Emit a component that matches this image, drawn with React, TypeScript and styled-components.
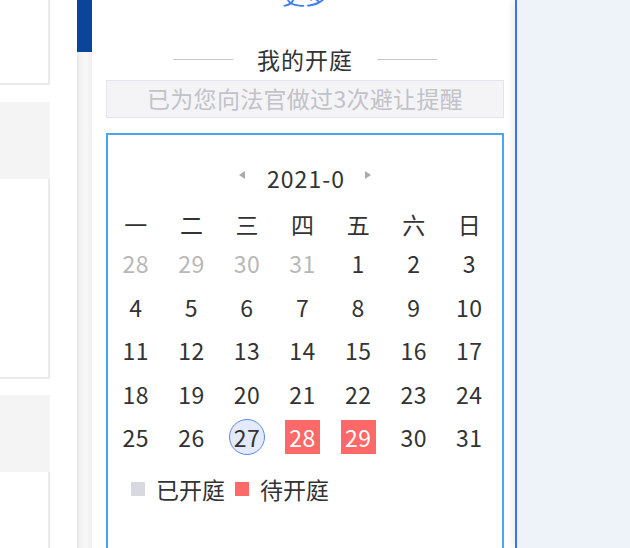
import React from 'react';
import styled, { createGlobalStyle } from 'styled-components';

const GlobalStyle = createGlobalStyle`
  html, body { margin: 0; padding: 0; }
  body {
    font-family: "Noto Sans CJK SC", "Noto Sans", sans-serif;
    background: #ffffff;
    color: #333333;
  }
`;

const Page = styled.div`
  display: flex;
  width: 630px;
  height: 548px;
  overflow: hidden;
  background: #ffffff;
`;

const SideList = styled.div`
  width: 77px;
  flex: none;
  overflow: hidden;
`;

const SideInner = styled.div`
  margin-top: -192px;
  display: flex;
  flex-direction: column;
  gap: 16.5px;
`;

const SideItem = styled.div`
  width: 50px;
  display: flex;
  flex-direction: column;
`;

const SideHead = styled.div`
  height: 77px;
  background: #f4f4f4;
`;

const SideBody = styled.div`
  height: 200px;
  box-sizing: border-box;
  background: #ffffff;
  border-right: 2px solid #ebebeb;
  border-bottom: 2px solid #ebebeb;
`;

const Scrollbar = styled.div`
  width: 15px;
  flex: none;
  background: linear-gradient(to right, #e6e6e6 0%, #f3f3f3 25%, #f8f8f8 60%, #efefef 100%);
`;

const Thumb = styled.div`
  height: 52px;
  background: #0b4599;
`;

const Panel = styled.div`
  width: 423px;
  flex: none;
  box-sizing: border-box;
  padding: 0 11px 0 14px;
  display: flex;
  flex-direction: column;
  overflow: hidden;
  background: #ffffff;
`;

const MoreLink = styled.a`
  display: block;
  margin-top: -21px;
  line-height: 30px;
  font-size: 23px;
  text-align: center;
  color: #3d7cf2;
  text-decoration: none;
`;

const Heading = styled.div`
  margin-top: 35px;
  height: 30px;
  display: flex;
  align-items: center;
  justify-content: center;
  gap: 24px;
  font-size: 23px;
  letter-spacing: 1px;
  color: #333333;
`;

const HeadLine = styled.span`
  width: 60px;
  height: 1px;
  background: #c8c8c8;
`;

const Note = styled.div`
  margin-top: 6px;
  height: 38px;
  box-sizing: border-box;
  border: 1px solid #e4e4ee;
  background: #f4f4f6;
  color: #c2c2c8;
  font-size: 23px;
  letter-spacing: 0.3px;
  line-height: 34px;
  text-align: center;
  white-space: nowrap;
`;

const CalendarBox = styled.div`
  margin-top: 15px;
  flex: 1;
  border: 2px solid #4ba6f2;
  border-bottom: none;
  padding-top: 28px;
  display: flex;
  flex-direction: column;
`;

const MonthBar = styled.div`
  height: 30px;
  display: flex;
  justify-content: center;
  align-items: flex-start;
  font-size: 23px;
  line-height: 30px;
  color: #333333;
`;

const MonthText = styled.span`
  letter-spacing: 1px;
`;

const Arrow = styled.span<{ $dir: 'left' | 'right' }>`
  width: 0;
  height: 0;
  margin-top: 8px;
  border-top: 4px solid transparent;
  border-bottom: 4px solid transparent;
  ${(p) =>
    p.$dir === 'left'
      ? 'border-right: 6px solid #aaaaaa; margin-right: 22px;'
      : 'border-left: 6px solid #aaaaaa; margin-left: 20px;'}
`;

const Grid = styled.div`
  margin-top: 12.5px;
  display: grid;
  grid-template-columns: repeat(7, 55.6px);
  grid-template-rows: 36px repeat(5, 43.5px);
  font-size: 23px;
`;

const WeekDay = styled.div`
  display: flex;
  align-items: center;
  justify-content: center;
  color: #333333;
`;

type DayKind = 'muted' | 'normal' | 'today' | 'pending';

const DayCell = styled.div`
  display: flex;
  align-items: center;
  justify-content: center;
`;

const DayMark = styled.span<{ $kind: DayKind }>`
  display: flex;
  align-items: center;
  justify-content: center;
  box-sizing: border-box;
  width: 36px;
  height: 34px;
  letter-spacing: 0.5px;
  color: ${(p) => (p.$kind === 'muted' ? '#b8b8b8' : p.$kind === 'pending' ? '#ffffff' : '#333333')};
  ${(p) => p.$kind === 'pending' && 'width: 35px; background: #fd6868;'}
  ${(p) =>
    p.$kind === 'today' &&
    'width: 36px; height: 36px; border-radius: 50%; border: 1.5px solid #5a8aec; background: #e4eafa;'}
`;

const Legend = styled.div`
  margin-top: 15px;
  padding-left: 23px;
  height: 30px;
  display: flex;
  align-items: center;
  font-size: 23px;
  color: #333333;
`;

const LegendSwatch = styled.span<{ $color: string }>`
  width: 14px;
  height: 14px;
  background: ${(p) => p.$color};
  margin-right: 11px;
`;

const LegendLabel = styled.span`
  margin-right: 10px;
`;

const RightPane = styled.div`
  flex: 1;
  border-left: 2px solid #3f72e8;
  background: #eef2f9;
  box-shadow: -3px 0 7px rgba(0, 0, 0, 0.07);
`;

const weekdays = ['一', '二', '三', '四', '五', '六', '日'];

const days: { d: number; k: DayKind }[] = [
  ...[28, 29, 30, 31].map((d) => ({ d, k: 'muted' as DayKind })),
  ...Array.from({ length: 26 }, (_, i) => ({ d: i + 1, k: 'normal' as DayKind })),
  { d: 27, k: 'today' },
  { d: 28, k: 'pending' },
  { d: 29, k: 'pending' },
  { d: 30, k: 'normal' },
  { d: 31, k: 'normal' },
];

export default function App() {
  return (
    <>
      <GlobalStyle />
      <Page>
        <SideList>
          <SideInner>
            {[0, 1, 2].map((i) => (
              <SideItem key={i}>
                <SideHead />
                <SideBody />
              </SideItem>
            ))}
          </SideInner>
        </SideList>
        <Scrollbar>
          <Thumb />
        </Scrollbar>
        <Panel>
          <MoreLink href="#">更多</MoreLink>
          <Heading>
            <HeadLine />
            <span>我的开庭</span>
            <HeadLine />
          </Heading>
          <Note>已为您向法官做过3次避让提醒</Note>
          <CalendarBox>
            <MonthBar>
              <Arrow $dir="left" />
              <MonthText>2021-0</MonthText>
              <Arrow $dir="right" />
            </MonthBar>
            <Grid>
              {weekdays.map((w) => (
                <WeekDay key={w}>{w}</WeekDay>
              ))}
              {days.map((x, i) => (
                <DayCell key={i}>
                  <DayMark $kind={x.k}>{x.d}</DayMark>
                </DayCell>
              ))}
            </Grid>
            <Legend>
              <LegendSwatch $color="#d8d9e0" />
              <LegendLabel>已开庭</LegendLabel>
              <LegendSwatch $color="#fd6868" />
              <LegendLabel>待开庭</LegendLabel>
            </Legend>
          </CalendarBox>
        </Panel>
        <RightPane />
      </Page>
    </>
  );
}
